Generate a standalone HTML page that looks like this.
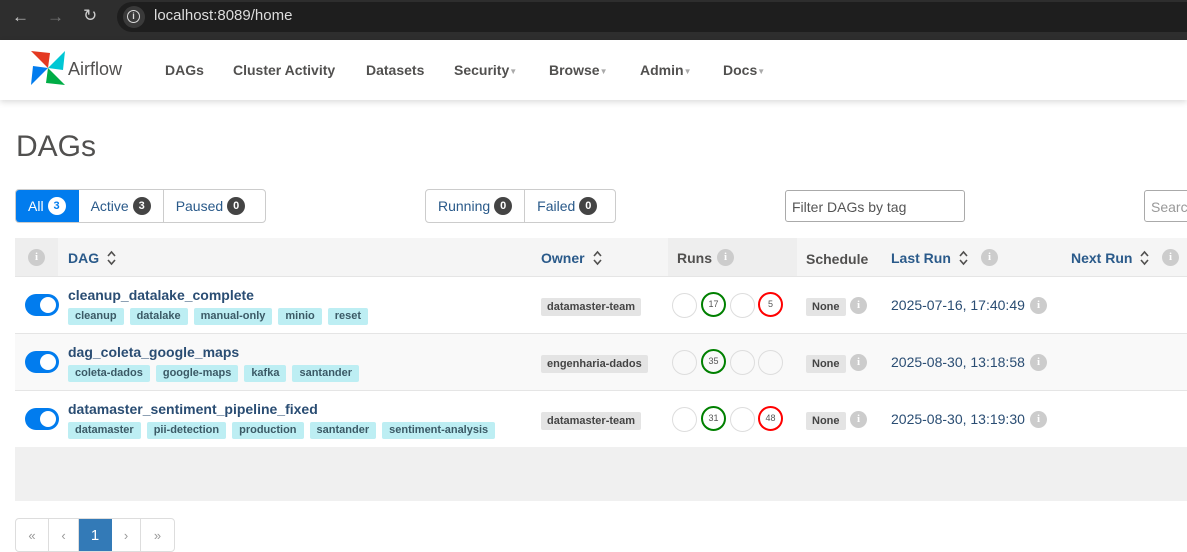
<!DOCTYPE html>
<html><head><meta charset="utf-8"><style>
*{box-sizing:border-box;margin:0;padding:0}
body{width:1187px;height:552px;overflow:hidden;background:#fff;font-family:"Liberation Sans",sans-serif;position:relative;color:#51504f}
.a{position:absolute}
.chrome{left:0;top:0;width:1187px;height:40px;background:#2e2e2e}
.url{left:117px;top:2px;width:1100px;height:30px;background:#1e1e1e;border-radius:16px}
.nav{left:0;top:40px;width:1187px;height:60px;background:#fff;box-shadow:0 2px 6px rgba(0,0,0,.15)}
.nl{top:62px;font-size:14px;font-weight:bold;color:#51504f}
.car{font-size:8px;color:#aaa;vertical-align:middle}
.btn{top:189px;height:34px;border:1px solid #ccc;border-radius:4px;display:flex;overflow:hidden}
.btn div{padding:0 12px;display:flex;align-items:center;font-size:14px;color:#2a5a8a;border-right:1px solid #ccc}
.btn div:last-child{border-right:none}
.bd{display:inline-block;min-width:18px;height:18px;border-radius:9px;background:#444;color:#fff;font-size:11px;font-weight:bold;text-align:center;line-height:18px;margin-left:4px}
.inp{height:32px;border:1px solid #aaa;border-radius:3px;font-size:14px;color:#555;padding:8px 6px}
.th{font-size:14px;font-weight:bold;color:#2a5a8a;top:250px}
.th svg{vertical-align:-3px;margin-left:8px}
.row{left:15px;width:1172px;height:57px;border-top:1px solid #e5e5e5}
.tog{left:25px;width:34px;height:22px;border-radius:11px;background:#017cee}
.tog:after{content:"";position:absolute;right:3px;top:3px;width:16px;height:16px;border-radius:50%;background:#fff}
.dn{left:68px;font-size:14px;font-weight:bold;color:#2a4d73}
.tags{left:68px;display:flex;gap:6px}
.tags span{background:#bdeef3;color:#3b5a66;font-size:11px;font-weight:bold;padding:2px 7px;border-radius:2px;height:17px;line-height:13px}
.own{left:541px;background:#e4e4e4;font-size:11px;font-weight:bold;color:#444;padding:3px 6px;border-radius:2px}
.c{width:25px;height:25px;border-radius:50%;border:1px solid #ddd;font-size:9px;text-align:center;line-height:23px;color:#555}
.g{border:2px solid #008000;line-height:21px}.r{border:2px solid #f00;line-height:21px}
.none{left:806px;background:#e4e4e4;font-size:11px;font-weight:bold;padding:3px 6px;color:#444;border-radius:2px}
.i{width:17px;height:17px;border-radius:50%;background:#ccc;color:#fff;font-size:11px;font-weight:bold;text-align:center;line-height:17px;font-family:"Liberation Serif",serif}
.lr{left:891px;font-size:14px;color:#2a4d73}
.pg{left:15px;top:518px;height:34px;border:1px solid #ddd;border-radius:4px;display:flex;overflow:hidden}
.pg div{width:32px;display:flex;align-items:center;justify-content:center;border-right:1px solid #ddd;font-size:13px;color:#999}
.pg div:last-child{border-right:none}
</style></head><body>
<div class="a chrome"></div>
<div class="a" style="left:12px;top:7px;color:#ccc;font-size:17px">←</div>
<div class="a" style="left:47px;top:7px;color:#777;font-size:17px">→</div>
<div class="a" style="left:83px;top:6px;color:#ccc;font-size:17px">↻</div>
<div class="a url"></div>
<div class="a" style="left:123px;top:6px;width:22px;height:22px;border-radius:50%;background:#3a3a3a"></div>
<div class="a" style="left:127px;top:10px;width:13px;height:13px;border-radius:50%;border:1.5px solid #ddd;font-size:9px;color:#ddd;text-align:center;line-height:10px;font-weight:bold">i</div>
<div class="a" style="left:154px;top:7px;color:#ddd;font-size:15px">localhost:8089/home</div>
<div class="a nav"></div>
<svg class="a" style="left:30px;top:50px" width="36" height="36" viewBox="0 0 36 36">
<path d="M18 18 L1 1 L20 3 Z" fill="#e43921"/><path d="M18 18 L35 1 L33 20 Z" fill="#00c7d4"/>
<path d="M18 18 L35 35 L16 33 Z" fill="#00ad46"/><path d="M18 18 L1 35 L3 16 Z" fill="#017cee"/></svg>
<div class="a" style="left:68px;top:59px;font-size:18px;color:#51504f">Airflow</div>
<div class="a nl" style="left:165px">DAGs</div>
<div class="a nl" style="left:233px">Cluster Activity</div>
<div class="a nl" style="left:366px">Datasets</div>
<div class="a nl" style="left:454px">Security<span class="car">▼</span></div>
<div class="a nl" style="left:549px">Browse<span class="car">▼</span></div>
<div class="a nl" style="left:640px">Admin<span class="car">▼</span></div>
<div class="a nl" style="left:723px">Docs<span class="car">▼</span></div>
<div class="a" style="left:16px;top:130px;font-size:30px;color:#51504f">DAGs</div>
<div class="a btn" style="left:15px;width:251px"><div style="background:#017cee;color:#fff;border-color:#017cee">All<span class="bd" style="background:#fff;color:#017cee">3</span></div><div>Active<span class="bd">3</span></div><div>Paused<span class="bd">0</span></div></div>
<div class="a btn" style="left:425px;width:191px"><div>Running<span class="bd">0</span></div><div>Failed<span class="bd">0</span></div></div>
<div class="a inp" style="left:785px;top:190px;width:180px">Filter DAGs by tag</div>
<div class="a inp" style="left:1144px;top:190px;width:60px;color:#999">Search</div>
<div class="a" style="left:15px;top:238px;width:1172px;height:38px;background:#f5f5f5"></div>
<div class="a" style="left:15px;top:238px;width:43px;height:38px;background:#eee"></div>
<div class="a" style="left:668px;top:238px;width:129px;height:38px;background:#eee"></div>
<div class="a i" style="left:28px;top:249px">i</div>
<div class="a th" style="left:68px">DAG<svg width="9" height="16" viewBox="0 0 9 16"><path d="M1 6 L4.5 2 L8 6 M1 10 L4.5 14 L8 10" fill="none" stroke="#51504f" stroke-width="1.6"/></svg></div>
<div class="a th" style="left:541px">Owner<svg width="9" height="16" viewBox="0 0 9 16"><path d="M1 6 L4.5 2 L8 6 M1 10 L4.5 14 L8 10" fill="none" stroke="#51504f" stroke-width="1.6"/></svg></div>
<div class="a th" style="left:677px;color:#51504f">Runs</div><div class="a i" style="left:717px;top:249px">i</div>
<div class="a th" style="left:806px;color:#51504f;top:251px">Schedule</div>
<div class="a th" style="left:891px">Last Run<svg width="9" height="16" viewBox="0 0 9 16"><path d="M1 6 L4.5 2 L8 6 M1 10 L4.5 14 L8 10" fill="none" stroke="#51504f" stroke-width="1.6"/></svg></div><div class="a i" style="left:981px;top:249px">i</div>
<div class="a th" style="left:1071px">Next Run<svg width="9" height="16" viewBox="0 0 9 16"><path d="M1 6 L4.5 2 L8 6 M1 10 L4.5 14 L8 10" fill="none" stroke="#51504f" stroke-width="1.6"/></svg></div><div class="a i" style="left:1162px;top:249px">i</div>

<div class="a row" style="top:276px;background:#fff"></div>
<div class="a row" style="top:333px;background:#f9f9f9"></div>
<div class="a row" style="top:390px;background:#fff"></div>
<div class="a" style="left:15px;top:447px;width:1172px;height:54px;background:#f0f0f0"></div>

<div class="a tog" style="top:294px"></div>
<div class="a dn" style="top:287px">cleanup_datalake_complete</div>
<div class="a tags" style="top:308px"><span>cleanup</span><span>datalake</span><span>manual-only</span><span>minio</span><span>reset</span></div>
<div class="a own" style="top:298px">datamaster-team</div>
<div class="a c" style="left:672px;top:293px"></div><div class="a c g" style="left:701px;top:292px">17</div><div class="a c" style="left:730px;top:293px"></div><div class="a c r" style="left:758px;top:292px">5</div>
<div class="a none" style="top:298px">None</div><div class="a i" style="left:850px;top:297px">i</div>
<div class="a lr" style="top:297px">2025-07-16, 17:40:49</div><div class="a i" style="left:1030px;top:297px">i</div>

<div class="a tog" style="top:351px"></div>
<div class="a dn" style="top:344px">dag_coleta_google_maps</div>
<div class="a tags" style="top:365px"><span>coleta-dados</span><span>google-maps</span><span>kafka</span><span>santander</span></div>
<div class="a own" style="top:355px">engenharia-dados</div>
<div class="a c" style="left:672px;top:350px"></div><div class="a c g" style="left:701px;top:349px">35</div><div class="a c" style="left:730px;top:350px"></div><div class="a c" style="left:758px;top:350px"></div>
<div class="a none" style="top:355px">None</div><div class="a i" style="left:850px;top:354px">i</div>
<div class="a lr" style="top:354px">2025-08-30, 13:18:58</div><div class="a i" style="left:1030px;top:354px">i</div>

<div class="a tog" style="top:408px"></div>
<div class="a dn" style="top:401px">datamaster_sentiment_pipeline_fixed</div>
<div class="a tags" style="top:422px"><span>datamaster</span><span>pii-detection</span><span>production</span><span>santander</span><span>sentiment-analysis</span></div>
<div class="a own" style="top:412px">datamaster-team</div>
<div class="a c" style="left:672px;top:407px"></div><div class="a c g" style="left:701px;top:406px">31</div><div class="a c" style="left:730px;top:407px"></div><div class="a c r" style="left:758px;top:406px">48</div>
<div class="a none" style="top:412px">None</div><div class="a i" style="left:850px;top:411px">i</div>
<div class="a lr" style="top:411px">2025-08-30, 13:19:30</div><div class="a i" style="left:1030px;top:411px">i</div>

<div class="a pg"><div style="width:33px">«</div><div style="width:30px">‹</div><div style="width:33px;background:#337ab7;color:#fff;font-size:15px;border-color:#337ab7">1</div><div style="width:29px">›</div><div style="width:33px">»</div></div>
</body></html>
